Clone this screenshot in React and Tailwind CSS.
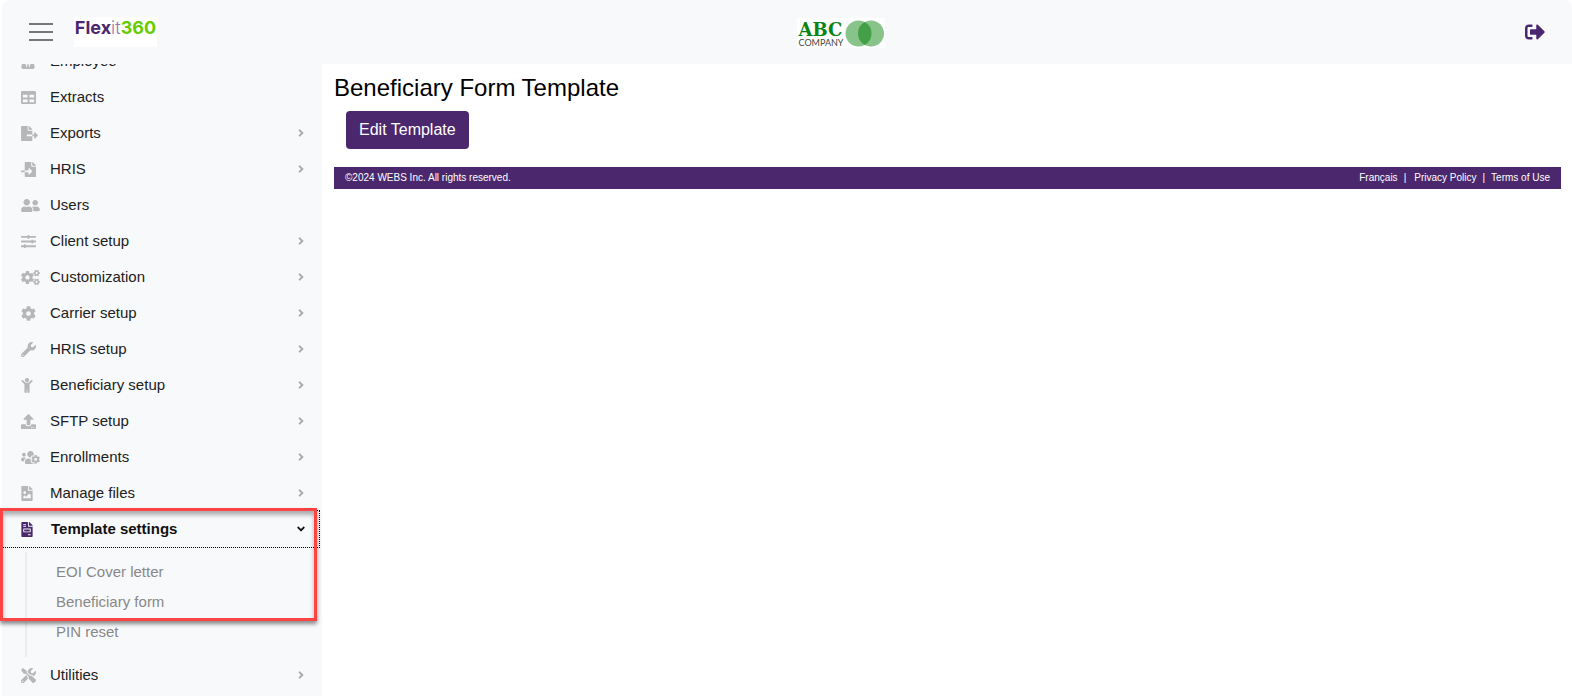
import {
  FaChild, FaCog, FaCogs, FaFileExport, FaFileImage, FaFileImport,
  FaFileInvoice, FaSignOutAlt, FaSlidersH, FaTable, FaTools, FaUpload,
  FaUserFriends, FaUserTie, FaUsersCog, FaWrench, FaAngleDown, FaAngleRight,
} from "react-icons/fa";

const ITEMS = [
  { label: "Employee", Icon: FaUserTie, size: "h-[15px] w-[14px]" },
  { label: "Extracts", Icon: FaTable, size: "h-[15px] w-[15px]" },
  { label: "Exports", Icon: FaFileExport, size: "h-[15px] w-[17px]", expandable: true },
  { label: "HRIS", Icon: FaFileImport, size: "h-[15px] w-[15px]", expandable: true },
  { label: "Users", Icon: FaUserFriends, size: "h-[15px] w-[19px]" },
  { label: "Client setup", Icon: FaSlidersH, size: "h-[15px] w-[15px]", expandable: true },
  { label: "Customization", Icon: FaCogs, size: "h-[15px] w-[19px]", expandable: true },
  { label: "Carrier setup", Icon: FaCog, size: "h-[15px] w-[15px]", expandable: true },
  { label: "HRIS setup", Icon: FaWrench, size: "h-[15px] w-[15px]", expandable: true },
  { label: "Beneficiary setup", Icon: FaChild, size: "h-[15px] w-[12px]", expandable: true },
  { label: "SFTP setup", Icon: FaUpload, size: "h-[15px] w-[15px]", expandable: true },
  { label: "Enrollments", Icon: FaUsersCog, size: "h-[15px] w-[19px]", expandable: true },
  { label: "Manage files", Icon: FaFileImage, size: "h-[15px] w-[12px]", expandable: true },
  {
    label: "Template settings",
    Icon: FaFileInvoice,
    size: "h-[15px] w-[12px]",
    expandable: true,
    children: ["EOI Cover letter", "Beneficiary form", "PIN reset"],
  },
  { label: "Utilities", Icon: FaTools, size: "h-[15px] w-[15px]", expandable: true },
];

function NavItem({ item }) {
  const { label, Icon, size, expandable, children } = item;
  const open = Boolean(children);
  return (
    <li className="relative pr-[3px]">
      <button
        type="button"
        aria-expanded={expandable ? open : undefined}
        className={
          open
            ? "flex h-9 w-full items-center pr-3 pl-[19px] text-left text-[15px] font-bold text-[#111] outline-1 outline-dotted outline-black"
            : "flex h-9 w-full items-center pr-3 pl-[19px] text-left text-[15px] text-[#212121]"
        }
      >
        <span className={open ? "flex w-[30px] shrink-0 text-[#4b286d]" : "flex w-[29px] shrink-0 text-[#b7b7b7]"}>
          <Icon className={size} />
        </span>
        <span className="grow">{label}</span>
        {expandable && !open && <FaAngleRight className="size-3 text-[#aaa]" />}
        {open && <FaAngleDown className="size-3 text-[#111]" />}
      </button>
      {open && (
        <ul className="mt-[5px] ml-[23px] border-l-2 border-[#ebedf0] pt-[5px] pb-[10px]">
          {children.map((child) => (
            <li key={child}>
              <a href="#" className="flex h-[30px] items-center pl-[29px] text-[15px] text-[#888]">
                {child}
              </a>
            </li>
          ))}
        </ul>
      )}
      {open && (
        <div className="pointer-events-none absolute -top-[3px] right-[5px] -left-[2px] h-[113px] border-3 border-[#fc4444] shadow-[0_3px_4px_rgba(0,0,0,0.45),inset_0_4px_4px_rgba(0,0,0,0.3)]" />
      )}
    </li>
  );
}

function FlexitLogo() {
  return (
    <a href="#" className="ml-[21px] flex h-[30px] w-[83px] justify-center bg-white font-[Inter,sans-serif] text-[18px] leading-[22px]">
      <span className="font-bold text-[#4b286d]">Flex</span>
      <span className="font-light text-[#8f7aa5]">it</span>
      <span className="font-bold text-[#66cc00]">360</span>
    </a>
  );
}

function CompanyLogo() {
  return (
    <div className="flex h-[30px] w-[88px] items-center bg-white pl-[2px]">
      <div className="w-[46px] shrink-0 pt-1">
        <div className="font-['DejaVu_Serif',serif] text-[18px] leading-[16px] font-bold text-[#0b8512]">ABC</div>
        <div className="font-[Lato,sans-serif] text-[9px] leading-[10px] text-[#444]">COMPANY</div>
      </div>
      <svg viewBox="0 0 40 27" className="h-[27px] w-10 shrink-0" aria-hidden="true">
        <circle cx="13.5" cy="13.5" r="13" fill="#88c48a" />
        <circle cx="26" cy="13.5" r="13" fill="#88c48a" />
        <path d="M19.75 2.1a13 13 0 0 1 0 22.8a13 13 0 0 1 0-22.8z" fill="#44a047" />
      </svg>
    </div>
  );
}

export default function App() {
  return (
    <div className="flex h-screen flex-col overflow-hidden bg-white pl-[2px] font-['Liberation_Sans',Arial,sans-serif]">
      <header className="grid h-16 shrink-0 grid-cols-[1fr_auto_1fr] items-center rounded-t-lg bg-[#f8f9fb]">
        <div className="flex items-center pl-[27px]">
          <button type="button" aria-label="Toggle menu" className="flex w-6 flex-col gap-[6px]">
            <span className="h-[2px] bg-[#777]" />
            <span className="h-[2px] bg-[#777]" />
            <span className="h-[2px] bg-[#777]" />
          </button>
          <FlexitLogo />
        </div>
        <div className="pt-[2px] pl-[107px]"><CompanyLogo /></div>
        <div className="flex justify-end pr-[27px]">
          <button type="button" aria-label="Sign out">
            <FaSignOutAlt className="size-5 text-[#4b286d]" />
          </button>
        </div>
      </header>
      <div className="flex min-h-0 grow">
        <aside className="-ml-[2px] flex w-[322px] shrink-0 overflow-hidden pl-[2px]">
          <nav className="flex grow flex-col bg-[#f8f9fb]">
            <ul className="-mt-[21px]">
              {ITEMS.map((item) => (
                <NavItem key={item.label} item={item} />
              ))}
            </ul>
          </nav>
        </aside>
        <main className="grow pt-2 pr-[11px] pl-3">
          <h1 className="text-2xl text-black">Beneficiary Form Template</h1>
          <button type="button" className="mt-[7px] ml-3 block h-[38px] rounded bg-[#4b286d] px-[13px] text-base text-white">
            Edit Template
          </button>
          <footer className="mt-[18px] flex h-[22px] items-center justify-between bg-[#4b286d] px-[11px] pb-[2px] text-[10px] text-white">
            <span>©2024 WEBS Inc. All rights reserved.</span>
            <div className="flex gap-[6px]">
              <a href="#">Français</a>
              <span>|</span>
              <a href="#" className="pl-[2px]">Privacy Policy</a>
              <span>|</span>
              <a href="#">Terms of Use</a>
            </div>
          </footer>
        </main>
      </div>
    </div>
  );
}
